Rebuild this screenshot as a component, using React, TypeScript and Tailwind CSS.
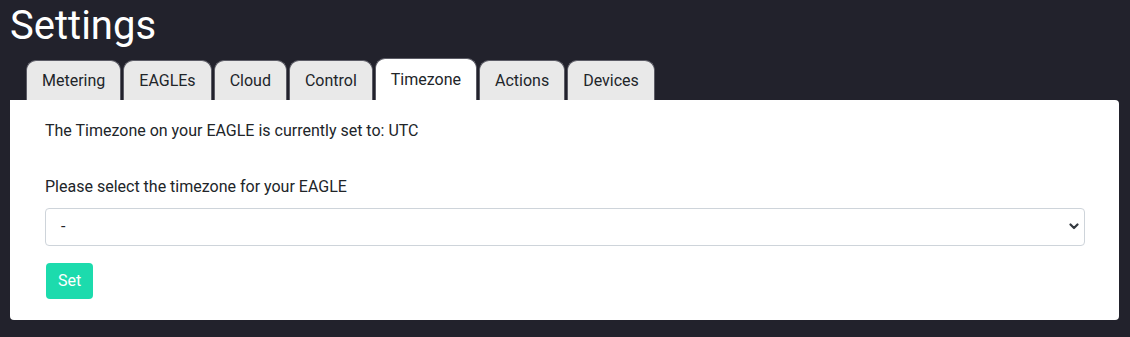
import React from "react";

const tabs = ["Metering", "EAGLEs", "Cloud", "Control", "Timezone", "Actions", "Devices"];

export default function App() {
  return (
    <div className="min-h-[337px] w-full bg-[#22222c] pt-[2px]" style={{ fontFamily: "Roboto, 'Liberation Sans', sans-serif" }}>
      <h1 className="ml-[10px] text-[40px] leading-[48px] text-white">Settings</h1>
      <div className="ml-[26px] mt-[8px] flex h-[42px] items-end gap-[2px]">
        {tabs.map((t) => {
          const active = t === "Timezone";
          return (
            <div
              key={t}
              className={
                active
                  ? "flex h-[42px] items-center rounded-t-[10px] border border-b-0 border-[#5c5c66] bg-white px-[15px] pt-[1px] text-[16px] text-[#212529]"
                  : "flex h-[40px] items-center rounded-t-[10px] border border-b-0 border-[#5c5c66] bg-[#e9e9e9] px-[15px] pt-[1px] text-[16px] text-[#212529]"
              }
            >
              {t}
            </div>
          );
        })}
      </div>
      <div className="ml-[10px] mr-[11px] rounded-b-[4px] rounded-tr-[4px] bg-white pl-[35px] pr-[34px] pb-[21px] pt-[19px] text-[16px] text-[#212529]">
        <p className="leading-[24px]">The Timezone on your EAGLE is currently set to: UTC</p>
        <p className="mt-[32px] leading-[24px]">Please select the timezone for your EAGLE</p>
        <div className="relative mt-[9px] flex h-[38px] items-center rounded-[4px] border border-[#ced4da] pl-[15px] pr-[36px]">
          <span>-</span>
          <svg className="absolute right-[5px] top-[14px]" width="10" height="8" viewBox="0 0 10 8">
            <path d="M1.5 1.5l3.5 3.5 3.5-3.5" fill="none" stroke="#343a40" strokeWidth="2.2" strokeLinecap="round" strokeLinejoin="round" />
          </svg>
        </div>
        <button className="ml-[1px] mt-[17px] h-[36px] rounded-[4px] bg-[#1cdbad] px-[12px] text-[16px] text-white">Set</button>
      </div>
    </div>
  );
}
